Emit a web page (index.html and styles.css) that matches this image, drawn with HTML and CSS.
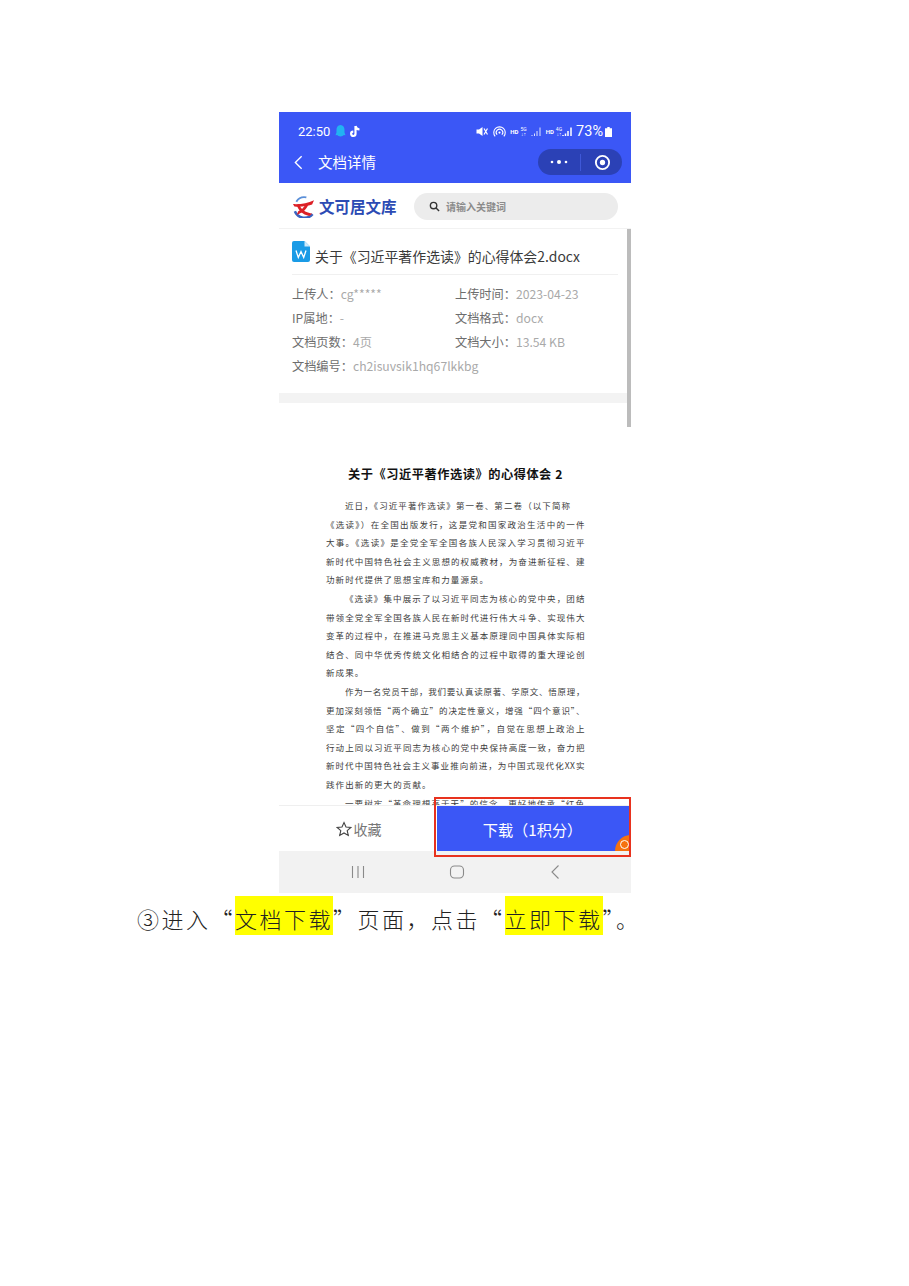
FILE: index.html
```html
<!DOCTYPE html>
<html lang="zh-CN">
<head>
<meta charset="utf-8">
<title>文档详情</title>
<link rel="stylesheet" href="styles.css">
</head>
<body>
<main class="phone">
  <section class="top-blue">
    <div class="status">
      <div class="status-left">
        <span>22:50</span>
        <svg class="st-qq" viewBox="0 0 10 12"><path d="M5 0C2.500 0 1.300 2 1.300 4.500V7L.4 9.500 2 9.300C2.600 11 7.400 11 8 9.300L9.600 9.500 8.700 7V4.500C8.700 2 7.500 0 5 0Z" fill="#22b3f2"/></svg>
        <svg class="st-tt" viewBox="0 0 12 13"><path d="M6.500 1V8.800A2.200 2.200 0 1 1 4.300 6.600M6.500 1C6.800 3 8.200 4.300 10.500 4.500" fill="none" stroke="#fff" stroke-width="2.200"/></svg>
      </div>
      <div class="status-right">
        <svg class="st-ic" viewBox="0 0 12 10"><path d="M.5 3H3L6.500 .5V9.500L3 7H.5Z" fill="#fff"/><path d="M8 2 11.500 8M8 8l3.500-6" stroke="#fff" stroke-width="1.200"/></svg>
        <svg class="st-ic st-wifi" viewBox="0 0 12 12"><g fill="none" stroke="#fff" stroke-width="1"><path d="M2 10.500A5.300 5.300 0 1 1 10 10.500"/><path d="M3.800 9A3 3 0 1 1 8.200 9"/></g><circle cx="6" cy="7" r="1" fill="#fff"/></svg>
        <span class="st-tiny st-hd">HD</span>
        <span class="st-net">5G<br>↓↑</span>
        <svg class="st-sig" viewBox="0 0 10 11"><path d="M1 10V9M3.500 10V7.500M6 10V5M9 10V1.500" stroke="#dfe4ff" stroke-width="1"/></svg>
        <span class="st-tiny st-hd2">HD</span>
        <span class="st-net">4G<br>↓↑</span>
        <svg class="st-sig st-sig-tight" viewBox="0 0 10 11"><path d="M1 10V9M3.500 10V7.500M6 10V5M9 10V1.500" stroke="#fff" stroke-width="1.500"/></svg>
        <span class="st-batt">73%</span>
        <svg class="st-bat" viewBox="0 0 7 10"><path d="M2.300 0H4.700V1.200H7V10H0V1.200H2.300Z" fill="#fff"/></svg>
      </div>
    </div>
    <div class="navbar">
      <svg class="nav-back" viewBox="0 0 10 16"><path d="M8.500 1 1.500 8 8.500 15" fill="none" stroke="#fff" stroke-width="1.500"/></svg>
      <span class="nav-title">文档详情</span>
      <div class="capsule">
        <svg class="cap-dots" viewBox="0 0 18 6"><circle cx="2" cy="3" r="1.300"/><circle cx="9" cy="3" r="2"/><circle cx="16" cy="3" r="1.300"/></svg>
        <span class="cap-sep"></span>
        <svg class="cap-ring" viewBox="0 0 18 18"><circle cx="9" cy="9" r="7" fill="none" stroke="#fff" stroke-width="2"/><circle cx="9" cy="9" r="2.800" fill="#fff"/></svg>
      </div>
    </div>
  </section>

  <section class="scroll-area">
    <header class="brandbar">
      <div class="brand">
        <svg class="brand-logo" viewBox="0 0 24 24">
          <path d="M15 2.500A10 10 0 0 0 4.500 7" fill="none" stroke="#5b8fd8" stroke-width="2"/>
          <path d="M3 17A11 11 0 0 0 21.500 20" fill="none" stroke="#3a63c0" stroke-width="2.600"/>
          <path d="M1 9.500C9 10 16 8.500 23 5.500L21 10C15 12 9 12.500 2.500 12Z" fill="#dc2026"/>
          <path d="M7.500 9.500C9 14.500 13.500 18.500 21 19.500L18 22C11 20.500 6.500 16 5 10.500Z" fill="#dc2026"/>
          <path d="M17 10C15 15.500 11 19 5 20.500L6.500 17C10 15.500 12.500 13 14 10Z" fill="#dc2026"/>
        </svg>
        <span class="brand-name">文可居文库</span>
      </div>
      <div class="search">
        <svg class="search-ic" viewBox="0 0 12 12"><circle cx="5" cy="5" r="3.500" fill="none" stroke="#333" stroke-width="1.500"/><path d="M7.700 7.700 11 11" stroke="#333" stroke-width="1.600"/></svg>
        <span class="search-ph">请输入关键词</span>
      </div>
    </header>

    <div class="info">
      <div class="file-title">
        <svg class="word-ic" viewBox="0 0 18 21"><path d="M2 0H12.500L18 5.500V19A2 2 0 0 1 16 21H2A2 2 0 0 1 0 19V2A2 2 0 0 1 2 0Z" fill="#1a9be6"/><path d="M12.500 0 18 5.500H12.500Z" fill="#cfeafa"/><path d="M4 9.500 6.300 16.500 9 10.500 11.700 16.500 14 9.500" fill="none" stroke="#fff" stroke-width="1.300"/></svg>
        <span class="file-name">关于《习近平著作选读》的心得体会2.docx</span>
      </div>
      <dl class="meta">
        <div class="meta-item"><dt>上传人：</dt><dd>cg*****</dd></div>
        <div class="meta-item"><dt>上传时间：</dt><dd>2023-04-23</dd></div>
        <div class="meta-item"><dt>IP属地：</dt><dd>-</dd></div>
        <div class="meta-item"><dt>文档格式：</dt><dd>docx</dd></div>
        <div class="meta-item"><dt>文档页数：</dt><dd>4页</dd></div>
        <div class="meta-item"><dt>文档大小：</dt><dd>13.54 KB</dd></div>
        <div class="meta-item meta-wide"><dt>文档编号：</dt><dd>ch2isuvsik1hq67lkkbg</dd></div>
      </dl>
    </div>
    <div class="band"></div>
    <div class="gap"></div>
    <span class="scrollbar"></span>
  </section>

  <article class="doc">
    <h1 class="doc-title">关于《习近平著作选读》的心得体会 2</h1>
    <p class="ln ind">近日，《习近平著作选读》第一卷、第二卷（以下简称</p>
    <p class="ln full">《选读》）在全国出版发行，这是党和国家政治生活中的一件</p>
    <p class="ln full">大事。《选读》是全党全军全国各族人民深入学习贯彻习近平</p>
    <p class="ln full">新时代中国特色社会主义思想的权威教材，为奋进新征程、建</p>
    <p class="ln">功新时代提供了思想宝库和力量源泉。</p>
    <p class="ln ind full">《选读》集中展示了以习近平同志为核心的党中央，团结</p>
    <p class="ln full">带领全党全军全国各族人民在新时代进行伟大斗争、实现伟大</p>
    <p class="ln full">变革的过程中，在推进马克思主义基本原理同中国具体实际相</p>
    <p class="ln full">结合、同中华优秀传统文化相结合的过程中取得的重大理论创</p>
    <p class="ln">新成果。</p>
    <p class="ln ind full">作为一名党员干部，我们要认真读原著、学原文、悟原理，</p>
    <p class="ln full">更加深刻领悟“两个确立”的决定性意义，增强“四个意识”、</p>
    <p class="ln full">坚定“四个自信”、做到“两个维护”，自觉在思想上政治上</p>
    <p class="ln full">行动上同以习近平同志为核心的党中央保持高度一致，奋力把</p>
    <p class="ln full">新时代中国特色社会主义事业推向前进，为中国式现代化XX实</p>
    <p class="ln">践作出新的更大的贡献。</p>
    <p class="ln ind">一要树牢“革命理想高于天”的信念，更好地传承“红色</p>
  </article>

  <section class="actions">
    <div class="fav">
      <svg class="fav-star" viewBox="0 0 16 16"><path d="M8 1.500 10 6 14.800 6.500 11.200 9.700 12.300 14.500 8 12 3.700 14.500 4.800 9.700 1.200 6.500 6 6Z" fill="none" stroke="#444" stroke-width="1.100"/></svg>
      <span>收藏</span>
    </div>
    <div class="download">
      <span>下载（1积分）</span>
      <span class="corner"></span>
    </div>
    <span class="redbox"></span>
  </section>

  <nav class="sysnav">
    <svg class="sys-ic" viewBox="0 0 16 16"><path d="M2.500 2V14M8 2V14M13.500 2V14" stroke="#8a8a8a" stroke-width="1.100"/></svg>
    <svg class="sys-ic" viewBox="0 0 16 16"><rect x="1.500" y="2" width="13" height="12" rx="4" fill="none" stroke="#8a8a8a" stroke-width="1.100"/></svg>
    <svg class="sys-ic" viewBox="0 0 16 16"><path d="M11.500 1.500 5 8 11.500 14.500" fill="none" stroke="#8a8a8a" stroke-width="1.100"/></svg>
  </nav>
</main>

<p class="caption">③进入“<mark>文档下载</mark>”页面，点击“<mark>立即下载</mark>”。</p>
</body>
</html>
```

FILE: styles.css
```css
* { box-sizing: border-box; }
html, body { margin: 0; padding: 0; background: #fff; }
body {
  height: 1286px;
  overflow: hidden;
  padding-top: 112px;
  font-family: "Noto Sans CJK SC", "Noto Sans", sans-serif;
}
p, h1, dl, dd { margin: 0; }

.phone {
  width: 352px;
  margin-left: 279px;
  display: flex;
  flex-direction: column;
}

.top-blue { height: 71px; background: #3b57f6; color: #fff; }
.status {
  height: 37px;
  padding: 0 19px 0 19px;
  display: flex;
  align-items: center;
  justify-content: space-between;
}
.status-left {
  display: flex;
  align-items: center;
  gap: 3px;
  font-family: Roboto, sans-serif;
  font-size: 13px;
  padding-top: 2px;
}
.st-qq { width: 11px; height: 13px; margin-left: 2px; }
.st-tt { width: 12px; height: 13px; }
.status-right {
  display: flex;
  align-items: center;
  gap: 2px;
  padding-top: 2px;
  font-family: Roboto, sans-serif;
}
.st-ic { width: 12px; height: 11px; }
.st-wifi { margin-left: 3px; height: 13px; width: 13px; }
.st-tiny { font-size: 6px; font-weight: 700; }
.st-hd { margin-left: 2px; }
.st-hd2 { margin-left: 3px; }
.st-net { font-size: 5px; line-height: 5px; text-align: center; }
.st-sig { width: 10px; height: 11px; margin-left: 2px; }
.st-sig-tight { margin-left: -2px; }
.st-batt { font-size: 14.500px; margin-left: 2px; }
.st-bat { width: 7px; height: 10px; }

.navbar {
  height: 34px;
  padding: 0 9px 8px 15px;
  display: flex;
  align-items: center;
}
.nav-back { width: 9px; height: 15px; }
.nav-title { font-size: 14.500px; margin: 0 0 2px 15px; }
.capsule {
  width: 84px;
  height: 26px;
  margin-left: auto;
  border-radius: 13px;
  background: #2b41b6;
  display: flex;
  align-items: center;
  padding: 0 11px 0 12px;
}
.cap-dots { width: 18px; height: 6px; fill: #fff; }
.cap-sep { width: 1px; height: 17px; background: #3f58d8; margin-left: 12px; }
.cap-ring { width: 17px; height: 17px; margin-left: auto; }

.scroll-area { position: relative; height: 244px; background: #fff; }
.brandbar {
  height: 46px;
  padding: 10px 13px 9px 13px;
  display: flex;
  align-items: center;
  justify-content: space-between;
  border-bottom: 1px solid #f2f2f2;
}
.brand { display: flex; align-items: center; gap: 4px; }
.brand-logo { width: 23px; height: 23px; }
.brand-name { font-size: 15.500px; font-weight: 700; color: #2c4bb4; }
.search {
  width: 204px;
  height: 27px;
  border-radius: 14px;
  background: #ececec;
  display: flex;
  align-items: center;
  padding-left: 15px;
  gap: 6px;
}
.search-ic { width: 11px; height: 11px; }
.search-ph { font-size: 10px; font-weight: 700; color: #8b8b8b; }

.info { padding: 12px 13px 0; height: 164px; }
.file-title {
  height: 34px;
  display: flex;
  align-items: flex-start;
  gap: 5px;
  border-bottom: 1px solid #f0f0f0;
}
.word-ic { width: 18px; height: 21px; flex: none; }
.file-name { font-size: 13.900px; line-height: 20px; color: #3a3a3a; margin-top: 5px; white-space: nowrap; }
.meta {
  display: grid;
  grid-template-columns: 163px 1fr;
  grid-auto-rows: 24px;
  padding-top: 7px;
  font-size: 12.200px;
  line-height: 24px;
}
.meta-item { display: flex; white-space: nowrap; }
.meta-item dt { color: #6d6d6d; }
.meta-item dd { color: #a9a9a9; }
.meta-wide { grid-column: 1 / 3; }

.band { height: 10px; background: #f3f3f3; }
.gap { height: 24px; }
.scrollbar { position: absolute; top: 46px; right: 0; bottom: 0; width: 4px; background: #bcbcbc; }

.doc {
  height: 378px;
  overflow: hidden;
  background: #fff;
  padding: 37px 46px 0 47px;
  color: #3c3c3c;
}
.doc-title {
  font-size: 12.200px;
  font-weight: 700;
  color: #111;
  text-align: center;
  line-height: 20px;
  letter-spacing: .55px;
  margin-bottom: 12px;
  white-space: nowrap;
}
.ln {
  height: 18.600px;
  line-height: 18.600px;
  font-size: 8.500px;
  letter-spacing: 1.100px;
  white-space: nowrap;
}
.full {
  letter-spacing: .5px;
  text-align: justify;
  text-align-last: justify;
  white-space: normal;
  overflow: hidden;
}
.ind { margin-left: 19px; }

.actions {
  position: relative;
  height: 46px;
  background: #fff;
  border-top: 1px solid #efefef;
  display: flex;
}
.fav {
  width: 158px;
  display: flex;
  align-items: center;
  justify-content: center;
  gap: 2px;
  padding-left: 1px;
  font-size: 14px;
  color: #777;
}
.fav-star { width: 16px; height: 16px; }
.download {
  position: relative;
  overflow: hidden;
  flex: 1;
  margin-right: 1px;
  background: #3b57f6;
  color: #fff;
  font-size: 15.200px;
  display: flex;
  align-items: center;
  justify-content: center;
  padding-right: 2px;
}
.corner {
  position: absolute;
  right: -17px;
  bottom: -16px;
  width: 32px;
  height: 32px;
  border-radius: 50%;
  background: #f5720f;
}
.corner::after {
  content: "";
  position: absolute;
  left: 5px;
  top: 5px;
  width: 7px;
  height: 7px;
  border: 1px solid #fff;
  border-radius: 50%;
}
.redbox {
  position: absolute;
  left: 155px;
  top: -9px;
  width: 197px;
  height: 60px;
  border: 2px solid #e8321e;
}

.sysnav {
  height: 42px;
  background: #f2f2f2;
  display: flex;
  align-items: center;
  padding: 0 68px 0 71px;
  justify-content: space-between;
}
.sys-ic { width: 16px; height: 16px; }

.caption {
  margin: 3px 0 0 137px;
  font-size: 22px;
  font-weight: 300;
  letter-spacing: 2.500px;
  line-height: 39px;
  color: #222;
  white-space: nowrap;
}
.caption mark {
  display: inline-block;
  height: 39px;
  padding-top: 5px;
  line-height: 34px;
  background: #ffff00;
  color: #222;
}
```
